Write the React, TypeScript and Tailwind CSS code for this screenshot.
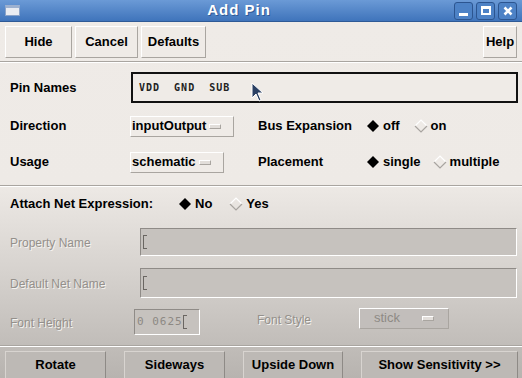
import React from "react";

const font = { fontFamily: '"Liberation Sans", Arial, sans-serif' };

function ToolButton({ label, className = "" }: { label: string; className?: string }) {
    return (
        <div
            className={`h-[32px] flex items-center justify-center bg-[#efebe7] border border-t-white border-l-white border-r-[#a9a5a0] border-b-[#a9a5a0] text-[13px] font-bold text-black ${className}`}
        >
            {label}
        </div>
    );
}

function Diamond({ on }: { on: boolean }) {
    return (
        <svg width="14" height="14" viewBox="0 0 14 14" className="shrink-0">
            {on ? (
                <polygon points="7,1 13,7 7,13 1,7" fill="#000" />
            ) : (
                <>
                    <polyline points="1,7 7,1 13,7" fill="none" stroke="#ffffff" strokeWidth="1.2" />
                    <polyline points="1,7 7,13 13,7" fill="none" stroke="#a8a4a0" strokeWidth="1.2" />
                </>
            )}
        </svg>
    );
}

function Radio({ on, label }: { on: boolean; label: string }) {
    return (
        <div className="flex items-center gap-[3px] text-[13px] font-bold">
            <Diamond on={on} />
            <span>{label}</span>
        </div>
    );
}

function Cycle({ label, w, disabled = false }: { label: string; w: string; disabled?: boolean }) {
    return (
        <div
            className={`${w} h-[21px] flex items-center border border-t-white border-l-white border-r-[#a9a5a0] border-b-[#a9a5a0] text-[13px] font-bold ${
                disabled ? "justify-center gap-[22px] text-[#8e8a85] bg-[#c2bebb] font-normal" : "pl-[1px] gap-[3px] bg-[#efebe7]"
            }`}
        >
            <span>{label}</span>
            <span className="w-[12px] h-[5px] border border-t-white border-l-white border-r-[#a9a5a0] border-b-[#a9a5a0] bg-[#e2deda]" />
        </div>
    );
}

function DimLabel({ children }: { children: React.ReactNode }) {
    return (
        <span className="text-[12px] text-[#94908b] [text-shadow:1px_1px_0_#f4f2ef]">{children}</span>
    );
}

function DimField({ className = "", children }: { className?: string; children?: React.ReactNode }) {
    return (
        <div
            className={`flex items-center pl-[2px] border border-t-[#8f8b87] border-l-[#8f8b87] border-r-white border-b-white bg-[#c6c2be] ${className}`}
        >
            {children}
        </div>
    );
}

function Caret() {
    return <span className="inline-block w-[4px] h-[14px] border border-[#6a6662] border-r-0" />;
}

function Sep() {
    return <div className="h-[2px] border-t border-t-[#a9a5a0] border-b border-b-white" />;
}

function BottomButton({ label, className = "" }: { label: string; className?: string }) {
    return (
        <div
            className={`h-[28px] flex items-center justify-center bg-[#bdb9b5] border border-t-[#d8d4d0] border-l-[#d8d4d0] border-r-[#8e8a86] border-b-[#8e8a86] text-[13px] font-bold ${className}`}
        >
            {label}
        </div>
    );
}

export default function App() {
    return (
        <div className="w-[522px] h-[378px] overflow-hidden flex flex-col text-black" style={font}>
            {/* title bar */}
            <div className="h-[22px] flex items-center bg-gradient-to-b from-[#6b9ad6] to-[#3f74bb] border-b border-[#2f5a96] px-[5px]">
                <div className="w-[15px] h-[11px] bg-[#e9ecf2] border border-[#8aa3c9] border-t-[3px] border-t-[#9db1d0]" />
                <div className="flex-1 text-center text-white font-bold text-[15px] tracking-[1px] pl-[4px] [text-shadow:1px_1px_0_#2f5a96]">Add Pin</div>
                <div className="flex gap-[3px]">
                    <div className="w-[19px] h-[18px] rounded-[3px] border border-[#2c5590] bg-[#4d82c6] flex items-end justify-center pb-[3px]">
                        <div className="w-[9px] h-[3px] bg-white" />
                    </div>
                    <div className="w-[19px] h-[18px] rounded-[3px] border border-[#2c5590] bg-[#4d82c6] flex items-center justify-center">
                        <div className="w-[10px] h-[9px] border-2 border-white border-t-[3px]" />
                    </div>
                    <div className="w-[19px] h-[18px] rounded-[3px] border border-[#2c5590] bg-[#4d82c6] flex items-center justify-center">
                        <svg width="10" height="10" viewBox="0 0 10 10">
                            <path d="M1.5 1.5 L8.5 8.5 M8.5 1.5 L1.5 8.5" stroke="#fff" strokeWidth="2.6" />
                        </svg>
                    </div>
                </div>
            </div>

            <div className="flex-1 flex flex-col bg-[linear-gradient(to_bottom,#efebe7_0%,#eeeae6_45%,#d6d2ce_70%,#b7b3af_100%)]">
                {/* toolbar */}
                <div className="flex items-center pl-[5px] pr-[5px] pt-[4px] pb-[3px] gap-[3px]">
                    <ToolButton label="Hide" className="w-[67px]" />
                    <ToolButton label="Cancel" className="w-[63px]" />
                    <ToolButton label="Defaults" className="w-[65px]" />
                    <div className="flex-1" />
                    <ToolButton label="Help" className="w-[34px]" />
                </div>
                <Sep />

                {/* pin section */}
                <div className="flex flex-col pl-[10px] pr-[4px] pt-[9px] pb-[10px] gap-[10px]">
                    <div className="flex items-center h-[31px]">
                        <span className="w-[121px] text-[13px] font-bold">Pin Names</span>
                        <div className="flex-1 h-[31px] border-2 border-[#111] bg-[#efebe7] flex items-center pl-[6px] relative">
                            <span className="text-[10px] font-bold tracking-[1px] text-[#222]" style={{ fontFamily: '"DejaVu Sans Mono", monospace' }}>
                                VDD&nbsp;&nbsp;GND&nbsp;&nbsp;SUB
                            </span>
                            <svg width="14" height="20" viewBox="0 0 14 20" className="absolute left-[118px] top-[8px]">
                                <path d="M1 1 L1 16 L5 12 L8 19 L10 18 L7 11 L12 11 Z" fill="#2a3f63" stroke="#fff" strokeWidth="1" />
                            </svg>
                        </div>
                    </div>
                    <div className="flex items-center h-[26px]">
                        <span className="w-[120px] text-[13px] font-bold">Direction</span>
                        <Cycle label="inputOutput" w="w-[104px]" />
                        <span className="w-[108px] ml-[24px] text-[13px] font-bold">Bus Expansion</span>
                        <div className="flex gap-[14px]">
                            <Radio on label="off" />
                            <Radio on={false} label="on" />
                        </div>
                    </div>
                    <div className="flex items-center h-[26px]">
                        <span className="w-[120px] text-[13px] font-bold">Usage</span>
                        <Cycle label="schematic" w="w-[94px]" />
                        <span className="w-[108px] ml-[34px] text-[13px] font-bold">Placement</span>
                        <div className="flex gap-[12px]">
                            <Radio on label="single" />
                            <Radio on={false} label="multiple" />
                        </div>
                    </div>
                </div>
                <Sep />

                {/* net expression */}
                <div className="flex flex-col pl-[10px] pr-[5px] pt-[7px]">
                    <div className="flex items-center h-[20px]">
                        <span className="w-[168px] text-[13px] font-bold">Attach Net Expression:</span>
                        <div className="flex gap-[17px]">
                            <Radio on label="No" />
                            <Radio on={false} label="Yes" />
                        </div>
                    </div>
                    <div className="flex items-center h-[28px] mt-[14px]">
                        <span className="w-[130px]"><DimLabel>Property Name</DimLabel></span>
                        <DimField className="flex-1 h-[28px]"><Caret /></DimField>
                    </div>
                    <div className="flex items-center h-[30px] mt-[12px]">
                        <span className="w-[130px]"><DimLabel>Default Net Name</DimLabel></span>
                        <DimField className="flex-1 h-[30px]"><Caret /></DimField>
                    </div>
                    <div className="flex items-center h-[28px] mt-[10px]">
                        <span className="w-[124px]"><DimLabel>Font Height</DimLabel></span>
                        <DimField className="w-[66px] h-[26px]">
                            <span className="text-[11px] text-[#8d8984] tracking-[1px]" style={{ fontFamily: '"DejaVu Sans Mono", monospace' }}>0 0625</span>
                            <Caret />
                        </DimField>
                        <span className="w-[102px] ml-[57px] -mt-[6px]"><DimLabel>Font Style</DimLabel></span>
                        <div className="-mt-[8px]">
                            <Cycle label="stick" w="w-[90px]" disabled />
                        </div>
                    </div>
                </div>
                <div className="mt-[9px]">
                    <Sep />
                </div>

                {/* bottom buttons */}
                <div className="flex items-center pl-[5px] pr-[4px] pt-[4px] gap-[18px]">
                    <BottomButton label="Rotate" className="w-[101px]" />
                    <BottomButton label="Sideways" className="w-[101px]" />
                    <BottomButton label="Upside Down" className="w-[100px]" />
                    <BottomButton label="Show Sensitivity >>" className="flex-1" />
                </div>
            </div>
        </div>
    );
}
